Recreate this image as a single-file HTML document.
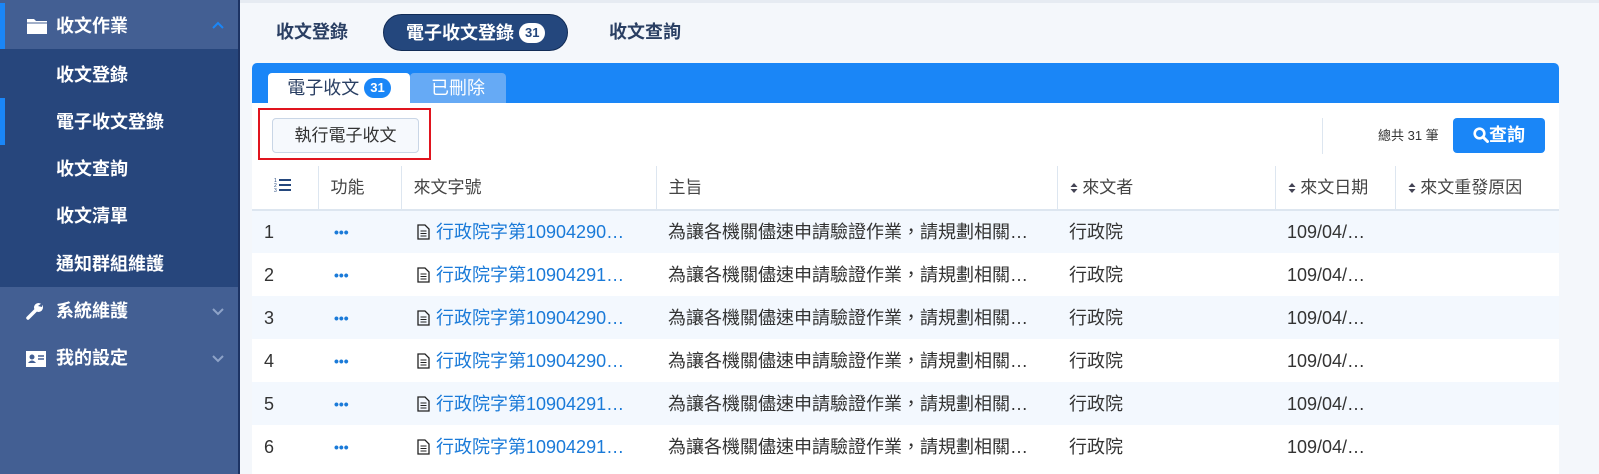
<!DOCTYPE html>
<html><head><meta charset="utf-8"><style>
*{box-sizing:border-box;margin:0;padding:0}
body{width:1599px;height:474px;overflow:hidden;background:#f4f7fb;font-family:"Liberation Sans","Noto Sans CJK TC",sans-serif;position:relative;color:#333}
.sb{position:absolute;left:0;top:0;width:240px;height:474px;background:#435f93;border-right:2px solid #1d3363}
.it{position:absolute;left:0;width:238px;color:#fff;font-size:18px;font-weight:bold;line-height:22px}
.sub{background:#27467c}
.acc{position:absolute;left:0;width:5px;background:#1a86f7}
.top{position:absolute;left:240px;top:0;width:1359px;height:3px;background:#e6ebf2}
.nav{position:absolute;top:14px;height:37px;line-height:37px;font-size:18px;color:#2a3f63;font-weight:bold}
.pill{background:#24477d;color:#fff;border-radius:19px;padding:0 22px;border:1px solid #112b55}
.badge{display:inline-block;background:#fff;color:#24477d;border-radius:11px;font-size:13px;line-height:20px;height:20px;padding:0 6px;vertical-align:2px;font-weight:bold}
.panel{position:absolute;left:252px;top:63px;width:1307px;height:411px;background:#fff;border-radius:5px 5px 0 0;overflow:hidden}
.ph{position:absolute;left:0;top:0;width:100%;height:40px;background:#1a86f7}
.tab{position:absolute;top:10px;height:30px;line-height:30px;font-size:18px;text-align:center;border-radius:4px 4px 0 0}
table{position:absolute;left:0;top:103px;width:1307px;border-collapse:collapse;font-size:18px;table-layout:fixed}
td,th{height:43px;line-height:22px;padding-left:12px;text-align:left;white-space:nowrap;overflow:hidden;font-weight:normal;vertical-align:middle}
th{border-right:1px solid #dde6f0;border-bottom:2px solid #dde6f0;color:#444;height:44px;font-size:17px}
tr:nth-child(even) td{background:#f3f8fe}
.lk{color:#1a7ad8;padding-left:16px}
.lk svg{vertical-align:-2px;margin-right:6px}
.dot{color:#1a7ad8;font-weight:bold;font-size:14px;padding-left:16px}
.chev{position:absolute;left:212px;top:4px}
</style></head><body>
<div class="sb">
 <div class="acc" style="top:3px;height:46px"></div>
 <div class="it" style="top:3px;height:46px;padding:12px 0 0 56px">收文作業
  <svg style="position:absolute;left:27px;top:15px" width="20" height="16" viewBox="0 0 20 16"><path d="M0 1h7l2 2h11v13H0z" fill="#fff"/><path d="M0 5h20" stroke="#435f93" stroke-width="1"/></svg>
  <svg class="chev" style="top:18px" width="12" height="8" viewBox="0 0 12 8"><path d="M1 7l5-5 5 5" stroke="#1a86f7" stroke-width="2" fill="none"/></svg></div>
 <div class="it sub" style="top:49px;height:238px"></div>
 <div class="acc" style="top:98px;height:47px"></div>
 <div class="it" style="top:64px;padding-left:56px">收文登錄</div>
 <div class="it" style="top:111px;padding-left:56px">電子收文登錄</div>
 <div class="it" style="top:158px;padding-left:56px">收文查詢</div>
 <div class="it" style="top:205px;padding-left:56px">收文清單</div>
 <div class="it" style="top:253px;padding-left:56px">通知群組維護</div>
 <div class="it" style="top:300px;padding-left:56px">系統維護
  <svg style="position:absolute;left:26px;top:2px" width="18" height="18" viewBox="0 0 18 18"><path d="M2 16l8-8" stroke="#fff" stroke-width="3.5" stroke-linecap="round"/><circle cx="12.5" cy="5.5" r="4.5" fill="#fff"/><path d="M12 4l4-3v4z" fill="#435f93"/></svg>
  <svg class="chev" style="top:8px" width="12" height="8" viewBox="0 0 12 8"><path d="M1 1l5 5 5-5" stroke="#8ea3c8" stroke-width="2" fill="none"/></svg></div>
 <div class="it" style="top:347px;padding-left:56px">我的設定
  <svg style="position:absolute;left:26px;top:4px" width="20" height="16" viewBox="0 0 20 16"><rect width="20" height="16" fill="#fff"/><circle cx="6" cy="6" r="2.5" fill="#435f93"/><path d="M2 12q4-5 8 0z" fill="#435f93"/><path d="M12 5h6M12 8h6" stroke="#435f93" stroke-width="1.5"/></svg>
  <svg class="chev" style="top:8px" width="12" height="8" viewBox="0 0 12 8"><path d="M1 1l5 5 5-5" stroke="#8ea3c8" stroke-width="2" fill="none"/></svg></div>
</div>
<div class="top"></div>
<div class="nav" style="left:276px">收文登錄</div>
<div class="nav pill" style="left:383px">電子收文登錄 <span class="badge">31</span></div>
<div class="nav" style="left:609px">收文查詢</div>
<div class="panel">
 <div class="ph"></div>
 <div class="tab" style="left:16px;width:142px;background:#fff;color:#2a3f63">電子收文 <span class="badge" style="background:#1a86f7;color:#fff">31</span></div>
 <div class="tab" style="left:158px;width:96px;background:#66aaf5;color:#fff">已刪除</div>
 <div style="position:absolute;left:6px;top:45px;width:173px;height:52px;border:2px solid #e0141e"></div>
 <div style="position:absolute;left:20px;top:55px;width:147px;height:35px;border:1px solid #c9d6e6;border-radius:4px;background:#f6f9fd;line-height:33px;text-align:center;font-size:17px;color:#333">執行電子收文</div>
 <div style="position:absolute;left:1070px;top:55px;width:1px;height:36px;background:#dde6f0"></div>
 <div style="position:absolute;left:1126px;top:62px;font-size:13px;color:#333">總共 31 筆</div>
 <div style="position:absolute;left:1201px;top:55px;width:92px;height:35px;background:#1a86f7;border-radius:4px;color:#fff;font-size:18px;line-height:35px;text-align:center;font-weight:bold"><svg width="16" height="16" viewBox="0 0 16 16" style="vertical-align:-2px"><circle cx="6.5" cy="6.5" r="4.8" stroke="#fff" stroke-width="2.6" fill="none"/><path d="M10 10l4.5 4.5" stroke="#fff" stroke-width="3" stroke-linecap="round"/></svg>查詢</div>
 <table>
  <colgroup><col style="width:66px"><col style="width:83px"><col style="width:255px"><col style="width:401px"><col style="width:218px"><col style="width:120px"><col></colgroup>
  <tr><th style="padding-left:22px"><svg width="18" height="16" viewBox="0 0 18 16"><text x="0" y="5" font-size="5" fill="#24477d">1</text><text x="0" y="10" font-size="5" fill="#24477d">2</text><text x="0" y="15" font-size="5" fill="#24477d">3</text><path d="M5 3h12M5 8h12M5 13h12" stroke="#24477d" stroke-width="2"/></svg></th><th>功能</th><th>來文字號</th><th>主旨</th><th><svg width="8" height="10" viewBox="0 0 8 10"><path d="M4 0l3.5 4h-7zM4 10l3.5-4h-7z" fill="#445"/></svg> 來文者</th><th><svg width="8" height="10" viewBox="0 0 8 10"><path d="M4 0l3.5 4h-7zM4 10l3.5-4h-7z" fill="#445"/></svg> 來文日期</th><th style="border-right:0"><svg width="8" height="10" viewBox="0 0 8 10"><path d="M4 0l3.5 4h-7zM4 10l3.5-4h-7z" fill="#445"/></svg> 來文重發原因</th></tr>
  <tr><td>1</td><td class="dot">•••</td><td class="lk"><svg width="13" height="16" viewBox="0 0 13 16"><path d="M1 1h7l4 4v10H1z" fill="none" stroke="#222" stroke-width="1.3"/><path d="M3.5 7h6M3.5 9.5h6M3.5 12h6" stroke="#222"/></svg>行政院字第10904290…</td><td>為讓各機關儘速申請驗證作業，請規劃相關…</td><td>行政院</td><td>109/04/…</td><td></td></tr>
  <tr><td>2</td><td class="dot">•••</td><td class="lk"><svg width="13" height="16" viewBox="0 0 13 16"><path d="M1 1h7l4 4v10H1z" fill="none" stroke="#222" stroke-width="1.3"/><path d="M3.5 7h6M3.5 9.5h6M3.5 12h6" stroke="#222"/></svg>行政院字第10904291…</td><td>為讓各機關儘速申請驗證作業，請規劃相關…</td><td>行政院</td><td>109/04/…</td><td></td></tr>
  <tr><td>3</td><td class="dot">•••</td><td class="lk"><svg width="13" height="16" viewBox="0 0 13 16"><path d="M1 1h7l4 4v10H1z" fill="none" stroke="#222" stroke-width="1.3"/><path d="M3.5 7h6M3.5 9.5h6M3.5 12h6" stroke="#222"/></svg>行政院字第10904290…</td><td>為讓各機關儘速申請驗證作業，請規劃相關…</td><td>行政院</td><td>109/04/…</td><td></td></tr>
  <tr><td>4</td><td class="dot">•••</td><td class="lk"><svg width="13" height="16" viewBox="0 0 13 16"><path d="M1 1h7l4 4v10H1z" fill="none" stroke="#222" stroke-width="1.3"/><path d="M3.5 7h6M3.5 9.5h6M3.5 12h6" stroke="#222"/></svg>行政院字第10904290…</td><td>為讓各機關儘速申請驗證作業，請規劃相關…</td><td>行政院</td><td>109/04/…</td><td></td></tr>
  <tr><td>5</td><td class="dot">•••</td><td class="lk"><svg width="13" height="16" viewBox="0 0 13 16"><path d="M1 1h7l4 4v10H1z" fill="none" stroke="#222" stroke-width="1.3"/><path d="M3.5 7h6M3.5 9.5h6M3.5 12h6" stroke="#222"/></svg>行政院字第10904291…</td><td>為讓各機關儘速申請驗證作業，請規劃相關…</td><td>行政院</td><td>109/04/…</td><td></td></tr>
  <tr><td>6</td><td class="dot">•••</td><td class="lk"><svg width="13" height="16" viewBox="0 0 13 16"><path d="M1 1h7l4 4v10H1z" fill="none" stroke="#222" stroke-width="1.3"/><path d="M3.5 7h6M3.5 9.5h6M3.5 12h6" stroke="#222"/></svg>行政院字第10904291…</td><td>為讓各機關儘速申請驗證作業，請規劃相關…</td><td>行政院</td><td>109/04/…</td><td></td></tr>
 </table>
</div>
</body></html>
